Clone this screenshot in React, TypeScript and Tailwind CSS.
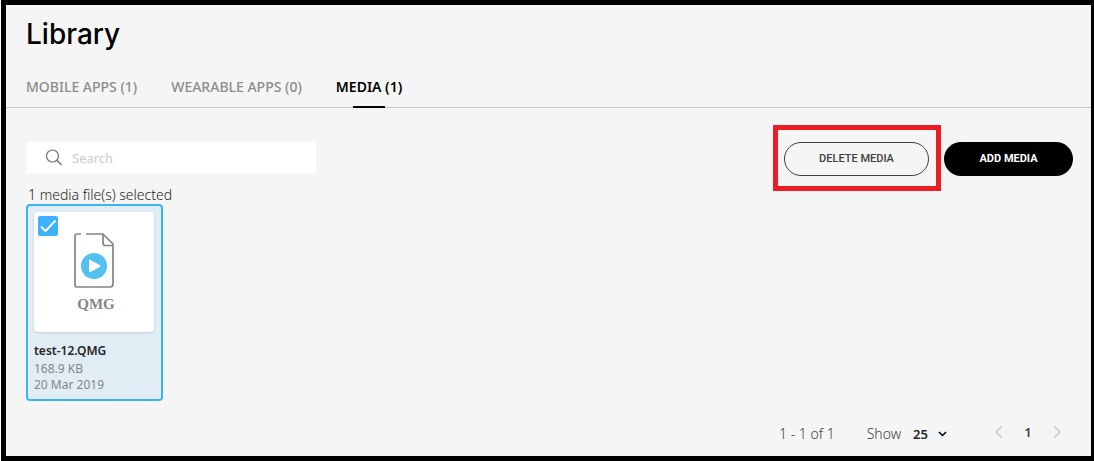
import { useState } from 'react';

const tabs = [
  { label: 'MOBILE APPS', count: 1 },
  { label: 'WEARABLE APPS', count: 0 },
  { label: 'MEDIA', count: 1 },
];

function QmgFileIcon() {
  return (
    <svg width="40" height="56" viewBox="0 0 40 56" fill="none" aria-hidden="true">
      <path
        d="M7 1H3Q1 1 1 3V52Q1 54 3 54H36Q39 54 39 51V11L29 1H12M29 1V10Q29 12.500 31.500 12.500H39"
        stroke="#858585"
        strokeWidth="1.700"
      />
      <circle cx="20" cy="33" r="13" fill="#50c1f0" />
      <path d="M15.500 27V39L26.500 33Z" fill="#fff" stroke="#fff" strokeLinejoin="round" />
    </svg>
  );
}

function SearchBox() {
  return (
    <label className="flex h-8 w-[290px] items-center gap-2 rounded bg-white pl-5">
      <svg width="18" height="18" viewBox="0 0 18 18" fill="none" stroke="#757575" className="shrink-0" aria-hidden="true">
        <circle cx="6.500" cy="7" r="6" strokeWidth="1.200" />
        <path d="M11 11.300L15.500 16" strokeWidth="1.500" />
      </svg>
      <input
        type="search"
        aria-label="Search"
        placeholder="Search"
        className="min-w-0 flex-1 bg-transparent pt-px text-[13px] outline-none placeholder:text-[#cccccc]"
      />
    </label>
  );
}

function MediaCard() {
  const [checked, setChecked] = useState(true);
  return (
    <article className="w-[137px] rounded border-2 border-[#3cb2fc] bg-[#e0edf5] p-1.5">
      <div className="relative flex h-[120px] w-[120px] flex-col items-center rounded bg-white pt-[21px] shadow">
        <label className="absolute top-1 left-1 block h-5 w-5">
          <input
            type="checkbox"
            checked={checked}
            onChange={(e) => setChecked(e.target.checked)}
            aria-label="Select test-12.QMG"
            className="peer block h-5 w-5 appearance-none rounded-xs border border-[#3cb2fc] bg-white checked:bg-[#3cb2fc]"
          />
          <svg
            viewBox="0 0 20 20"
            className="pointer-events-none absolute inset-0 hidden h-5 w-5 peer-checked:block"
            fill="none"
            stroke="#fff"
            strokeWidth="2"
            aria-hidden="true"
          >
            <path d="M3 10.500L7.500 15L17.500 4.500" />
          </svg>
        </label>
        <QmgFileIcon />
        <span className="mt-[5px] pl-1 font-['Liberation_Serif',serif] text-[15px] leading-5 font-bold text-[#858585]">
          QMG
        </span>
      </div>
      <h2 className="mt-[11px] text-xs leading-4 font-semibold text-[#252525]">test-12.QMG</h2>
      <p className="mt-0.5 text-xs leading-4 text-[#858585]">168.9 KB</p>
      <p className="text-xs leading-4 text-[#858585]">20 Mar 2019</p>
    </article>
  );
}

export default function App() {
  const [active, setActive] = useState('MEDIA');
  return (
    <div className="bg-white pl-px font-['Noto_Sans',sans-serif]">
      <main className="flex min-h-screen flex-col border-[5px] border-r-[3px] border-black bg-[#f5f5f5]">
        <h1 className="px-5 pt-[13px] font-['Inter',sans-serif] text-[28px] leading-8 font-medium text-black">Library</h1>
        <nav className="mt-[23px] flex gap-[34px] border-b border-[#c8c8c8] px-5">
          {tabs.map(({ label, count }) => (
            <button
              key={label}
              type="button"
              onClick={() => setActive(label)}
              className={`relative h-[34px] pb-1.5 text-sm ${active === label ? 'font-semibold text-black' : 'font-medium text-[#8c8c8c]'}`}
            >
              {label} ({count})
              {active === label && <span className="absolute -bottom-px left-1/2 h-0.5 w-8 -translate-x-1/2 bg-black" />}
            </button>
          ))}
        </nav>
        <div className="mt-[34px] flex items-start justify-between pr-[18px] pl-5">
          <div>
            <SearchBox />
            <p className="pt-[11px] pl-0.5 text-sm leading-[19px] font-light text-[#252525]">1 media file(s) selected</p>
            <MediaCard />
          </div>
          <div className="flex items-center gap-[15px] font-['Roboto',sans-serif] text-[11px]">
            <div className="relative">
              <button type="button" className="block h-[34px] w-[145px] rounded-full border border-[#404040] pt-px font-medium text-[#404040]">
                DELETE MEDIA
              </button>
              <span className="pointer-events-none absolute -top-[17px] -right-3 -bottom-[15px] -left-[11px] border-[5px] border-[#ee1c24]" />
            </div>
            <button type="button" className="h-[34px] w-[129px] rounded-full bg-black pt-px font-bold text-white">
              ADD MEDIA
            </button>
          </div>
        </div>
        <footer className="mt-auto flex items-center justify-end pr-[30px] pb-2.5 text-sm leading-5 text-[#404040]">
          <span className="mr-8 font-light">1 - 1 of 1</span>
          <label className="mr-[46px] flex items-center gap-3">
            <span className="font-light">Show</span>
            <span className="relative flex items-center">
              <select defaultValue="25" className="w-9 appearance-none bg-transparent text-[13px] font-semibold text-[#252525]">
                <option>25</option>
                <option>50</option>
                <option>100</option>
              </select>
              <svg className="pointer-events-none absolute right-0.5" width="9" height="6" viewBox="0 0 9 6" fill="none" stroke="#000" strokeWidth="1.500" aria-hidden="true">
                <path d="M1 1L4.500 4.500L8 1" />
              </svg>
            </span>
          </label>
          <nav aria-label="Pagination" className="flex items-center gap-5 pb-1">
            <button type="button" aria-label="Previous page">
              <svg width="8" height="12" viewBox="0 0 8 12" fill="none" stroke="#a0a0a0" aria-hidden="true">
                <path d="M7 0.500L1 6L7 11.500" />
              </svg>
            </button>
            <button type="button" className="w-2.5 text-[13px] font-semibold">1</button>
            <button type="button" aria-label="Next page">
              <svg width="8" height="12" viewBox="0 0 8 12" fill="none" stroke="#a0a0a0" aria-hidden="true">
                <path d="M1 0.500L7 6L1 11.500" />
              </svg>
            </button>
          </nav>
        </footer>
      </main>
    </div>
  );
}
